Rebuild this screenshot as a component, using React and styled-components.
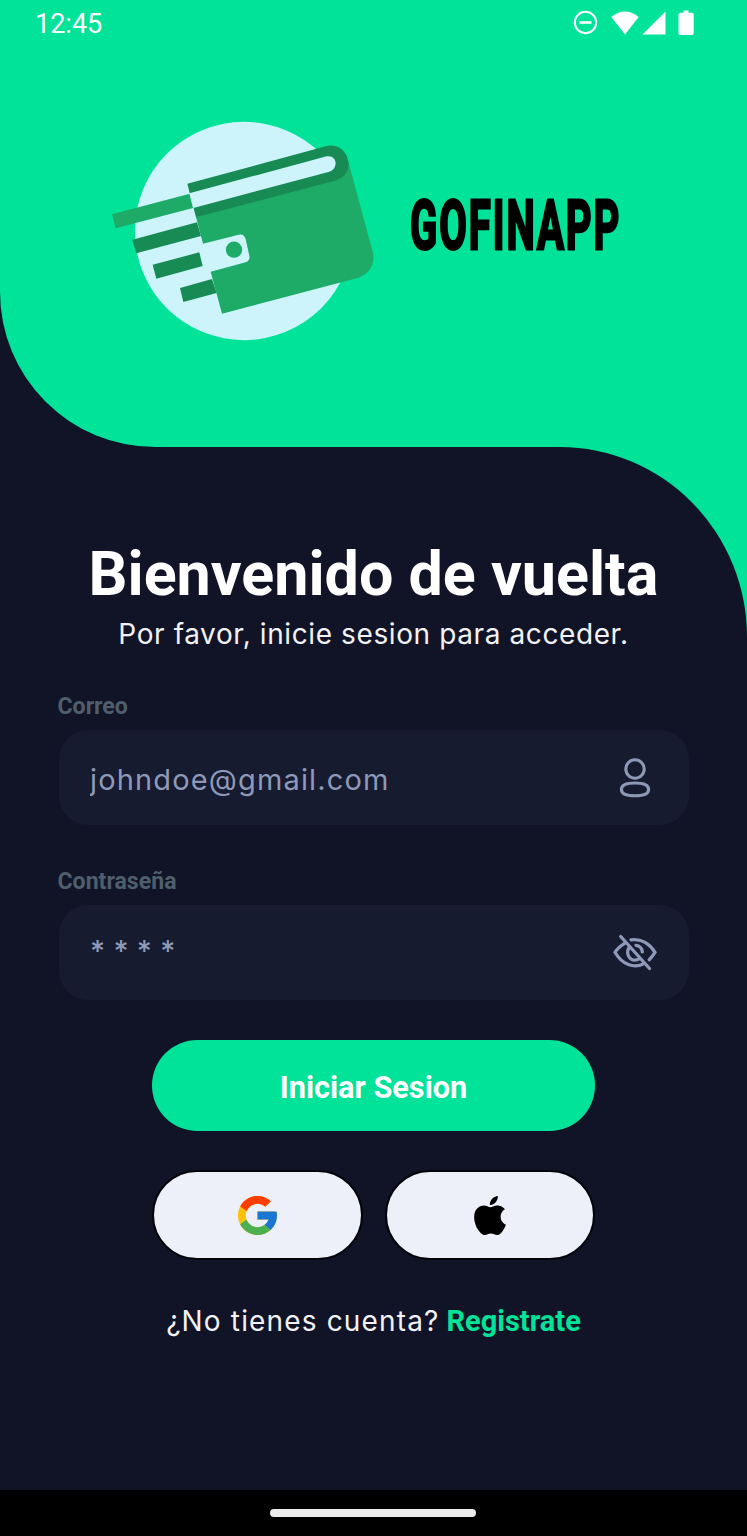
import { useState } from "react";
import styled, { createGlobalStyle } from "styled-components";

export default function App() {
  const [email, setEmail] = useState("");
  const [password, setPassword] = useState("");

  return (
    <>
      <GlobalStyle />
      <Screen>
        <Hero>
          <StatusBar>
            <span>12:45</span>
            <StatusIcons />
          </StatusBar>
          <Brand>
            <WalletLogo />
            <BrandName>
              <span>GOFINAPP</span>
            </BrandName>
          </Brand>
        </Hero>
        <PanelBack>
          <Panel>
            <Title>Bienvenido de vuelta</Title>
            <Subtitle>Por favor, inicie sesion para acceder.</Subtitle>
            <Form onSubmit={(e) => e.preventDefault()}>
              <Label htmlFor="email">Correo</Label>
              <Field>
                <Input
                  id="email"
                  placeholder="johndoe@gmail.com"
                  value={email}
                  onChange={(e) => setEmail(e.target.value)}
                />
                <UserIcon />
              </Field>
              <Label htmlFor="password">Contraseña</Label>
              <Field>
                <Input
                  id="password"
                  type="password"
                  placeholder="* * * *"
                  $masked
                  value={password}
                  onChange={(e) => setPassword(e.target.value)}
                />
                <EyeOffIcon />
              </Field>
              <Actions>
                <SubmitButton type="submit">Iniciar Sesion</SubmitButton>
                <SocialButton type="button" aria-label="Google">
                  <GoogleLogo />
                </SocialButton>
                <SocialButton type="button" aria-label="Apple">
                  <AppleLogo />
                </SocialButton>
              </Actions>
            </Form>
            <Footer>
              <Question>¿No tienes cuenta?</Question>
              <SignUp href="#">Registrate</SignUp>
            </Footer>
          </Panel>
        </PanelBack>
        <NavBar>
          <NavHandle />
        </NavBar>
      </Screen>
    </>
  );
}

function StatusIcons() {
  return (
    <svg width="124" height="28" viewBox="0 0 124 28" fill="#fff">
      <circle cx="14.5" cy="13.5" r="10.7" fill="none" stroke="#fff" strokeWidth="2" />
      <rect x="8.5" y="12.2" width="12" height="2.6" />
      <path d="M54 25.5 40.3 8C48 .5 60 .5 67.7 8Z" />
      <path d="M71.5 25.5 94.5 2.5v23Z" />
      <path d="M112.500 1.500h5v2.200h3.400c1 0 1.800.8 1.800 1.800v18.800c0 1-.8 1.800-1.800 1.800h-11.600c-1 0-1.800-.8-1.800-1.800V5.500c0-1 .8-1.800 1.800-1.800h3.200Z" />
    </svg>
  );
}

function WalletLogo() {
  return (
    <svg width="290" height="240" viewBox="0 0 870 720">
      <circle cx="432" cy="363" r="327.5" fill="#cef4fb" />
      <path d="M36 313 269 251 279 294 47 355Z" fill="#1dab67" />
      <g fill="#178b53">
        <path d="M97 389 291 337 303 378 109 430Z" />
        <path d="M158 464 298 427 308 468 169 506Z" />
        <path d="M240 534 336 507 350 549 250 576Z" />
      </g>
      <path
        d="M288 321 745 155 818 425C828 465 805 494 770 505L366 611 332 485 437 457Q451 452 448 437L437 388Q432 370 416 374L309 401Z"
        fill="#1dab67"
      />
      <path
        d="M262 221 677 109C710 100 737 120 744 150 751 178 735 204 705 212L288 322Z"
        fill="#178b53"
      />
      <path d="M268 250 680 139C712 134 716 176 688 185L280 294Z" fill="#cef4fb" />
      <circle cx="402" cy="419" r="24.5" fill="#1dab67" />
    </svg>
  );
}

function UserIcon() {
  return (
    <svg width="44" height="44" viewBox="0 0 44 44" fill="none" stroke="#8e99b8" strokeWidth="3.1">
      <circle cx="22" cy="13" r="9.2" />
      <path d="M22 27c9 0 13.600 2 13.600 6.400S31 39.700 22 39.700 8.400 37.800 8.400 33.400 13 27 22 27Z" />
    </svg>
  );
}

function EyeOffIcon() {
  return (
    <svg
      width="44"
      height="44"
      viewBox="0 0 44 44"
      fill="none"
      stroke="#8e99b8"
      strokeWidth="3.3"
      strokeLinecap="round"
    >
      <path d="M7.700 5.500 36.500 37.500" />
      <path d="M18 8.800C28.500 7.400 37 13 42 21.300 40.500 24 38.500 26.500 36.200 28.700" />
      <path d="M12 12.200C7.500 15 4 18.200 2 21.300 9 33.500 21 38 31 32.600" />
      <path d="M16.200 16.500C12.500 22 16 29.200 22 29.200 23.700 29.200 25.200 28.600 26.500 27.700" />
      <path d="M23 14.300C26.500 14.700 29 17.500 29.300 20.800" />
    </svg>
  );
}

function GoogleLogo() {
  return (
    <svg width="39" height="39" viewBox="4 4 40 40">
      <path
        fill="#ffc107"
        d="M43.600 20.100H42V20H24v8h11.300C33.700 32.700 29.200 36 24 36c-6.600 0-12-5.400-12-12s5.400-12 12-12c3.100 0 5.800 1.200 8 3l5.700-5.700C34 6.100 29.300 4 24 4 13 4 4 13 4 24s9 20 20 20 20-9 20-20c0-1.300-.1-2.700-.4-3.900z"
      />
      <path
        fill="#ff3d00"
        d="m6.300 14.700 6.600 4.800C14.700 15.100 19 12 24 12c3.100 0 5.800 1.200 8 3l5.700-5.700C34 6.100 29.300 4 24 4 16.300 4 9.700 8.300 6.300 14.700z"
      />
      <path
        fill="#4caf50"
        d="M24 44c5.200 0 9.900-2 13.400-5.200l-6.200-5.200C29.200 35.100 26.700 36 24 36c-5.200 0-9.600-3.300-11.300-7.900l-6.500 5C9.500 39.600 16.200 44 24 44z"
      />
      <path
        fill="#1976d2"
        d="M43.600 20.100H42V20H24v8h11.300c-.8 2.200-2.200 4.200-4.100 5.600l6.200 5.200C37 39.200 44 34 44 24c0-1.300-.1-2.700-.4-3.900z"
      />
    </svg>
  );
}

function AppleLogo() {
  return (
    <svg width="32" height="39" viewBox="0 0 814 1000">
      <path d="M788 341c-6 4-108 62-108 190 0 149 130 201 134 203-1 3-21 72-69 142-42 62-87 123-155 123s-85-39-163-39c-76 0-103 41-165 41s-105-57-155-127C49 791 0 664 0 542c0-194 126-297 251-297 66 0 121 43 163 43 39 0 101-46 176-46 29 0 131 3 198 99zM554 160c31-37 53-88 53-139 0-7-1-14-2-20-50 2-110 34-147 76-28 32-55 83-55 135 0 8 1 16 2 18 3 1 8 1 14 1 45 0 102-30 135-71z" />
    </svg>
  );
}

const GlobalStyle = createGlobalStyle`
  * {
    box-sizing: border-box;
  }

  body {
    margin: 0;
    background: #111426;
  }
`;

const Screen = styled.div`
  width: 747px;
  height: 1536px;
  display: flex;
  flex-direction: column;
  background: #111426;
  font-family: Roboto, sans-serif;
  color: #ffffff;
  overflow: hidden;
`;

const Hero = styled.header`
  height: 447px;
  flex-shrink: 0;
  background: #00e399;
  border-bottom-left-radius: 155px;
`;

const StatusBar = styled.div`
  height: 48px;
  padding: 0 52px 0 35px;
  display: flex;
  justify-content: space-between;
  align-items: center;
  font-size: 27px;

  svg {
    margin-bottom: 3px;
  }
`;

const Brand = styled.div`
  display: flex;
  padding: 62px 0 0 100px;
`;

const BrandName = styled.div`
  width: 220px;
  height: 84px;
  margin: 74px 0 0 20px;

  span {
    display: block;
    width: max-content;
    font-size: 69px;
    font-weight: 700;
    line-height: 84px;
    letter-spacing: 3.4px;
    color: #000000;
    -webkit-text-stroke: 3px #000000;
    transform: scaleX(0.58);
    transform-origin: left center;
  }
`;

/* green strip that shows behind the rounded corner of the panel */
const PanelBack = styled.div`
  flex: 1;
  background: linear-gradient(to right, #111426 50%, #00e399 50%);
`;

const Panel = styled.main`
  height: 100%;
  padding: 92px 58px 0;
  display: flex;
  flex-direction: column;
  background: #111426;
  border-top-right-radius: 187px 190px;
`;

const Title = styled.h1`
  margin: 0;
  font-size: 61px;
  font-weight: 700;
  line-height: 70px;
  text-align: center;
  white-space: nowrap;
`;

const Subtitle = styled.p`
  margin: 7px 0 0;
  font-family: Inter, sans-serif;
  font-size: 28px;
  line-height: 36px;
  letter-spacing: 0.6px;
  text-align: center;
  white-space: nowrap;
  color: #f2f2f4;
`;

const Form = styled.form`
  display: flex;
  flex-direction: column;
  margin-top: 41px;
`;

const Label = styled.label`
  margin-left: -0.5px;
  font-size: 23.1px;
  font-weight: 700;
  line-height: 28px;
  color: #4f5e6c;
`;

const Field = styled.div`
  height: 95px;
  margin: 9px 0 43px 1px;
  padding: 0 32px 0 31px;
  display: flex;
  align-items: center;
  background: #161b30;
  border-radius: 29px;
`;

const Input = styled.input`
  flex: 1;
  min-width: 0;
  height: 60px;
  padding: ${(props) => (props.$masked ? "0 0 10px" : "0 0 2px")};
  margin-top: 5px;
  border: none;
  outline: none;
  background: transparent;
  font-family: Inter, sans-serif;
  font-size: 29px;
  font-weight: ${(props) => (props.$masked ? 500 : 400)};
  letter-spacing: ${(props) => (props.$masked ? "0.3px" : "1.15px")};
  color: #8e99b8;

  &::placeholder {
    color: #8e99b8;
    opacity: 1;
  }
`;

const Actions = styled.div`
  width: 443px;
  margin: -3px auto 0;
  display: grid;
  grid-template-columns: 1fr 1fr;
  gap: 39px 22px;
`;

const SubmitButton = styled.button`
  grid-column: 1 / -1;
  height: 91px;
  padding: 4px 0 0;
  border: none;
  border-radius: 46px;
  background: #00e399;
  font-family: Roboto, sans-serif;
  font-size: 30.7px;
  font-weight: 700;
  color: #ffffff;
  cursor: pointer;
`;

const SocialButton = styled.button`
  height: 90px;
  padding: 0;
  display: flex;
  justify-content: center;
  align-items: center;
  border: 2px solid #04050a;
  border-radius: 45px;
  background: #edf0f8;
  cursor: pointer;
`;

const Footer = styled.div`
  margin-top: 43px;
  display: flex;
  justify-content: center;
  align-items: baseline;
  gap: 7px;
  line-height: 36px;
`;

const Question = styled.span`
  font-family: Inter, sans-serif;
  font-size: 28px;
  letter-spacing: 1.15px;
  color: #f2f2f4;
`;

const SignUp = styled.a`
  font-size: 29px;
  font-weight: 700;
  color: #00e399;
  text-decoration: none;
`;

const NavBar = styled.nav`
  height: 46px;
  flex-shrink: 0;
  padding-right: 1px;
  display: flex;
  justify-content: center;
  align-items: center;
  background: #000000;
`;

const NavHandle = styled.div`
  width: 206px;
  height: 8px;
  border-radius: 4px;
  background: #ececec;
`;
